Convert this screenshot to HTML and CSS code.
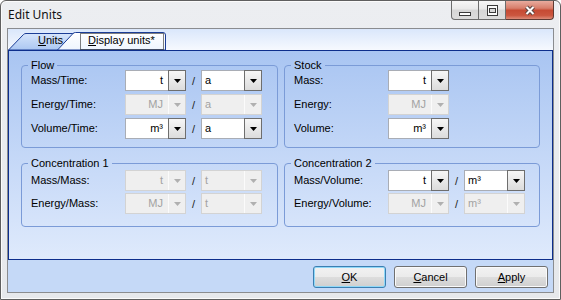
FILE: index.html
```html
<!DOCTYPE html>
<html>
<head>
<meta charset="utf-8">
<link rel="stylesheet" href="styles.css">
</head>
<body>
<div class="window">
  <div class="titlebar">
    <span class="title">Edit Units</span>
    <div class="caption">
      <div class="cbtn min"><svg width="12" height="4" viewBox="0 0 12 4"><rect x="0.5" y="0.5" width="11" height="3" fill="#fdfdfd" stroke="#3a3a3a"/></svg></div>
      <div class="cbtn max"><svg width="11" height="11" viewBox="0 0 11 11"><rect x="0.5" y="0.5" width="10" height="10" fill="#fbfbfb" stroke="#3a3a3a"/><rect x="2.5" y="3.5" width="6" height="4" fill="#d8d8d8" stroke="#3a3a3a"/></svg></div>
      <div class="cbtn close"><svg width="12" height="11" viewBox="0 0 12 11"><path d="M2.5,2 L9.5,9 M9.5,2 L2.5,9" stroke="#5a4440" stroke-width="4" fill="none"/><path d="M2.5,2 L9.5,9 M9.5,2 L2.5,9" stroke="#ffffff" stroke-width="2" fill="none"/></svg></div>
    </div>
  </div>
  <div class="client">
    <div class="tabstrip">
      <svg class="tabshapes" width="545" height="21" viewBox="0 0 545 21">
        <defs>
          <linearGradient id="gu" x1="0" y1="0" x2="0" y2="1"><stop offset="0" stop-color="#d6e5fb"/><stop offset="1" stop-color="#abc7f2"/></linearGradient>
          <linearGradient id="gd" x1="0" y1="0" x2="0" y2="1"><stop offset="0" stop-color="#ffffff"/><stop offset="1" stop-color="#eef5fe"/></linearGradient>
        </defs>
        <path d="M0.5,21 L15.5,5.5 Q16.5,4.5 18,4.5 L70.5,4.5 L70.5,21 Z" fill="url(#gu)" stroke="#1b3d96"/>
        <path d="M49.5,21 L65,4.5 Q66,3.5 67.5,3.5 L155,3.5 Q157.5,3.5 157.5,6 L157.5,21 Z" fill="url(#gd)" stroke="#1b3d96"/>
        <rect x="72.5" y="4.5" width="83" height="16" fill="none" stroke="#000" stroke-dasharray="1 1"/>
      </svg>
      <div class="tablabels">
        <span class="tablabel units"><u>U</u>nits</span>
        <span class="tablabel display"><u>D</u>isplay units*</span>
      </div>
    </div>
    <div class="page">
      <fieldset class="group top">
        <legend>Flow</legend>
        <div class="rows pair">
          <span class="lbl">Mass/Time:</span>
          <div class="combo right"><span class="val">t</span><span class="btn"><svg width="7" height="4" viewBox="0 0 7 4"><polygon points="0,0 7,0 3.5,4"/></svg></span></div>
          <span class="slash">/</span>
          <div class="combo"><span class="val">a</span><span class="btn"><svg width="7" height="4" viewBox="0 0 7 4"><polygon points="0,0 7,0 3.5,4"/></svg></span></div>

          <span class="lbl">Energy/Time:</span>
          <div class="combo right dis"><span class="val">MJ</span><span class="btn"><svg width="7" height="4" viewBox="0 0 7 4"><polygon points="0,0 7,0 3.5,4"/></svg></span></div>
          <span class="slash">/</span>
          <div class="combo dis"><span class="val">a</span><span class="btn"><svg width="7" height="4" viewBox="0 0 7 4"><polygon points="0,0 7,0 3.5,4"/></svg></span></div>

          <span class="lbl">Volume/Time:</span>
          <div class="combo right"><span class="val">m³</span><span class="btn"><svg width="7" height="4" viewBox="0 0 7 4"><polygon points="0,0 7,0 3.5,4"/></svg></span></div>
          <span class="slash">/</span>
          <div class="combo"><span class="val">a</span><span class="btn"><svg width="7" height="4" viewBox="0 0 7 4"><polygon points="0,0 7,0 3.5,4"/></svg></span></div>
        </div>
      </fieldset>
      <fieldset class="group top">
        <legend>Stock</legend>
        <div class="rows single">
          <span class="lbl">Mass:</span>
          <div class="combo right"><span class="val">t</span><span class="btn"><svg width="7" height="4" viewBox="0 0 7 4"><polygon points="0,0 7,0 3.5,4"/></svg></span></div>

          <span class="lbl">Energy:</span>
          <div class="combo right dis"><span class="val">MJ</span><span class="btn"><svg width="7" height="4" viewBox="0 0 7 4"><polygon points="0,0 7,0 3.5,4"/></svg></span></div>

          <span class="lbl">Volume:</span>
          <div class="combo right"><span class="val">m³</span><span class="btn"><svg width="7" height="4" viewBox="0 0 7 4"><polygon points="0,0 7,0 3.5,4"/></svg></span></div>
        </div>
      </fieldset>
      <fieldset class="group bottom">
        <legend>Concentration 1</legend>
        <div class="rows pair">
          <span class="lbl">Mass/Mass:</span>
          <div class="combo right dis"><span class="val">t</span><span class="btn"><svg width="7" height="4" viewBox="0 0 7 4"><polygon points="0,0 7,0 3.5,4"/></svg></span></div>
          <span class="slash">/</span>
          <div class="combo dis"><span class="val">t</span><span class="btn"><svg width="7" height="4" viewBox="0 0 7 4"><polygon points="0,0 7,0 3.5,4"/></svg></span></div>

          <span class="lbl">Energy/Mass:</span>
          <div class="combo right dis"><span class="val">MJ</span><span class="btn"><svg width="7" height="4" viewBox="0 0 7 4"><polygon points="0,0 7,0 3.5,4"/></svg></span></div>
          <span class="slash">/</span>
          <div class="combo dis"><span class="val">t</span><span class="btn"><svg width="7" height="4" viewBox="0 0 7 4"><polygon points="0,0 7,0 3.5,4"/></svg></span></div>
        </div>
      </fieldset>
      <fieldset class="group bottom">
        <legend>Concentration 2</legend>
        <div class="rows pair">
          <span class="lbl">Mass/Volume:</span>
          <div class="combo right"><span class="val">t</span><span class="btn"><svg width="7" height="4" viewBox="0 0 7 4"><polygon points="0,0 7,0 3.5,4"/></svg></span></div>
          <span class="slash">/</span>
          <div class="combo"><span class="val">m³</span><span class="btn"><svg width="7" height="4" viewBox="0 0 7 4"><polygon points="0,0 7,0 3.5,4"/></svg></span></div>

          <span class="lbl">Energy/Volume:</span>
          <div class="combo right dis"><span class="val">MJ</span><span class="btn"><svg width="7" height="4" viewBox="0 0 7 4"><polygon points="0,0 7,0 3.5,4"/></svg></span></div>
          <span class="slash">/</span>
          <div class="combo dis"><span class="val">m³</span><span class="btn"><svg width="7" height="4" viewBox="0 0 7 4"><polygon points="0,0 7,0 3.5,4"/></svg></span></div>
        </div>
      </fieldset>
    </div>
    <div class="buttons">
      <button class="pbtn default"><u>O</u>K</button>
      <button class="pbtn"><u>C</u>ancel</button>
      <button class="pbtn"><u>A</u>pply</button>
    </div>
  </div>
</div>
</body>
</html>
```
FILE: styles.css
```css
html, body {
  margin: 0;
  padding: 0;
  background: #ffffff;
}

body {
  font-family: "Liberation Sans", Arial, sans-serif;
  font-size: 11px;
  color: #000;
}

.window {
  width: 561px;
  height: 300px;
  box-sizing: border-box;
  border: 1px solid #5f5f5f;
  border-radius: 6px 6px 0 0;
  background: linear-gradient(#eceef1, #e6e8eb);
  box-shadow: inset 0 0 0 1px #fbfbfb;
  padding: 0 6px 6px;
  display: flex;
  flex-direction: column;
}

.titlebar {
  height: 27px;
  flex: none;
  display: flex;
  align-items: flex-start;
  justify-content: space-between;
}

.title {
  font-family: "Noto Sans", "Open Sans", sans-serif;
  font-size: 12px;
  line-height: 16px;
  padding: 6px 0 0 1px;
  color: #111;
}

.caption {
  display: flex;
  height: 19px;
}

.cbtn {
  height: 19px;
  box-sizing: border-box;
  border-bottom: 1px solid #6c6c6c;
  border-right: 1px solid #6c6c6c;
  display: flex;
  align-items: flex-end;
  justify-content: center;
  padding-bottom: 3px;
  background: linear-gradient(#f7f7f7 0%, #e9e9e9 45%, #d6d6d6 50%, #dcdcdc 100%);
}

.cbtn svg { display: block; }

.min {
  width: 28px;
  border-left: 1px solid #6c6c6c;
  border-radius: 0 0 0 4px;
}

.max {
  width: 27px;
}

.close {
  width: 48px;
  border-radius: 0 0 4px 0;
  border-color: #5e3a33;
  background: linear-gradient(#e8ab9e 0%, #d77e6b 40%, #c64a33 52%, #cb563f 80%, #dd8b78 100%);
}

.client {
  flex: 1;
  border: 1px solid #8a8c8f;
  display: flex;
  flex-direction: column;
  background: #c5d9f7;
}

.tabstrip {
  height: 21px;
  flex: none;
  display: grid;
  background: linear-gradient(#dae7fb, #f6f9fe);
}

.tabshapes,
.tablabels {
  grid-area: 1 / 1;
}

.tabshapes { display: block; }

.tablabels {
  display: flex;
  align-items: flex-start;
  padding: 5px 0 0 30px;
  line-height: 13px;
  font-size: 11px;
}

.tablabel.display {
  margin-left: 25px;
}

.page {
  height: 210px;
  flex: none;
  box-sizing: border-box;
  border: 1px solid #0d2e8c;
  background: linear-gradient(#a9c5f2, #dfeafc);
  display: grid;
  grid-template-columns: 257px 256px;
  align-content: start;
  column-gap: 6px;
  row-gap: 9px;
  padding: 8px 12px 0;
}

.group {
  margin: 0;
  padding: 0;
  min-width: 0;
  border: 1px solid #7b9bd7;
  border-radius: 4px;
}

.group legend {
  margin-left: 6px;
  padding: 0 3px;
  line-height: 12px;
  font-size: 11px;
}

.rows {
  display: grid;
  align-items: center;
  padding-left: 9px;
}

.rows.pair {
  grid-template-columns: 94px 61px 15px 61px;
}

.rows.single {
  grid-template-columns: 94px 61px;
}

.top .rows {
  row-gap: 3px;
  margin-top: -1px;
  padding-bottom: 8px;
}

.bottom .rows {
  row-gap: 2px;
  margin-top: 1px;
  padding-bottom: 12px;
}

.lbl {
  white-space: nowrap;
  line-height: 13px;
}

.slash {
  text-align: center;
  color: #222;
}

.combo {
  height: 21px;
  box-sizing: border-box;
  border: 1px solid #a9adb5;
  background: #ffffff;
  display: flex;
}

.combo .val {
  flex: 1;
  line-height: 19px;
  padding: 0 3px;
  white-space: nowrap;
  overflow: hidden;
}

.combo.right .val {
  text-align: right;
  padding-right: 5px;
}

.combo .btn {
  width: 18px;
  margin: -1px -1px -1px 0;
  box-sizing: border-box;
  border: 1px solid #6e6e6e;
  background: linear-gradient(#f6f6f6, #dcdcdc);
  display: flex;
  align-items: center;
  justify-content: center;
}

.combo .btn svg {
  display: block;
  fill: #000;
}

.combo.dis {
  background: #efefef;
  border-color: #d3d3d3;
  color: #a2a2a2;
}

.combo.dis .btn {
  margin: 0;
  width: 17px;
  border: none;
  border-left: 1px solid #fbfbfb;
  background: #efefef;
}

.combo.dis .btn svg {
  fill: #b0b0b0;
}

.buttons {
  flex: 1;
  display: flex;
  justify-content: flex-end;
  align-items: flex-start;
  gap: 8px;
  padding: 6px 5px 0 0;
}

.pbtn {
  width: 73px;
  height: 22px;
  box-sizing: border-box;
  margin: 0;
  padding: 0;
  font-family: "Liberation Sans", Arial, sans-serif;
  font-size: 11px;
  color: #000;
  border: 1px solid #707070;
  border-radius: 3px;
  background: linear-gradient(#f2f2f2 0%, #ebebeb 50%, #dddddd 51%, #cfcfcf 100%);
  box-shadow: inset 0 0 0 1px #fafafa;
}

.pbtn.default {
  border-color: #3c7fb1;
  box-shadow: inset 0 0 0 1px #8fd8f8;
}
```
